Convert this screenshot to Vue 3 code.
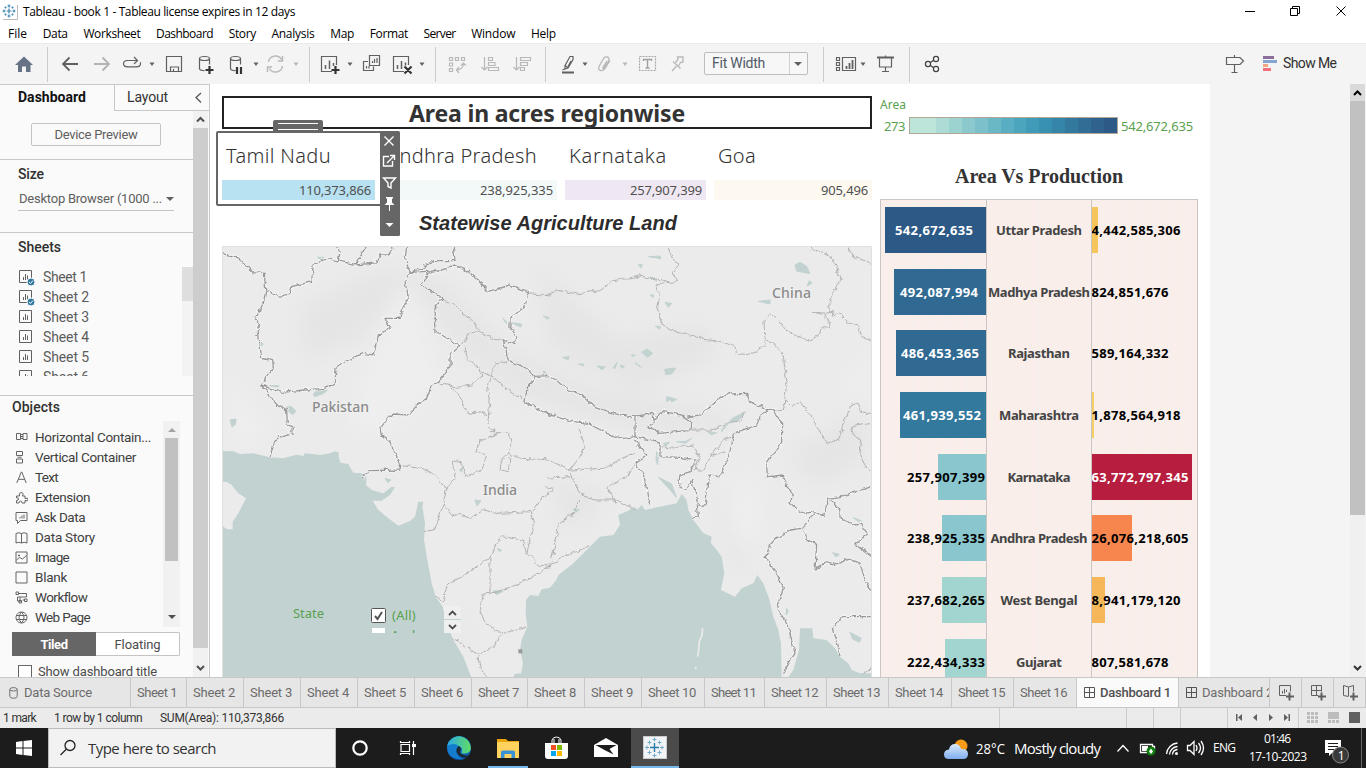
<script setup>
// Spreads a label's letters so that it takes the given width in pixels
const vFit = {
  mounted(el, { value }) {
    const w = el.getBoundingClientRect().width
    el.style.letterSpacing = (value - w) / el.textContent.length + 'px'
  },
}

const menu = [['File', 19], ['Data', 25], ['Worksheet', 57], ['Dashboard', 57], ['Story', 27], ['Analysis', 43], ['Map', 24], ['Format', 38], ['Server', 32], ['Window', 44], ['Help', 25]]
const sheets = [1, 2, 3, 4, 5, 6]
const objects = [
  ['Horizontal Contain...', 116, 'M1.5 2.500h4v6h-4zM8 2.500h4v6h-4zM5.500 3.500h2.500M5.500 5.500h2.500M5.500 7.500h2.500'],
  ['Vertical Container', 101, 'M1.500.5h6v4h-6zM1.5 8h6v4h-6zM2.500 6.200h4'],
  ['Text', 23, 'M1.8 12L6.3 1h.5L11.2 12M3.4 8.3h6.3'],
  ['Extension', 55, 'M1.500 5h3q-1-3 1.500-3.500q3 0 1.500 3.500h2.500v2.500q3-1 3 .8q0 2.500-3 1.200v2.500h-3q0-2-1.500-2t-1.500 2h-2.500v-2.500q2 0 2-1.500t-2-1.200z'],
  ['Ask Data', 50, 'M1 1.500h11v8h-6.500l-3 3v-3h-1.500zM5 7.500v-1.500M7 7.500v-3M9 7.500v-4'],
  ['Data Story', 60, 'M1 2.500q3-1.500 5.500 0v9.500q-2.500-1.500-5.500 0zM6.500 2.500q2.500-1.500 5.500 0v9.500q-3-1.500-5.500 0'],
  ['Image', 34, 'M1 1h11v11h-11zM1.500 9l3-2.500 3 1.500 4-3.500M4 3.500v2M3 4.500h2'],
  ['Blank', 32, 'M1 1h11v11h-11z'],
  ['Workflow', 52, 'M4 2.500h7.500v3.500h-9v4h3M5 6v5M1 1h2.500v2.500h-2.500zM4 9.500h2.500v2.500h-2.500zM9.500 8h2.500v2.500h-2.500zM7.500 9h2'],
  ['Web Page', 55, 'M6.500 1a5.500 5.500 0 1 0 .01 0zM6.500 1q-5 5.500 0 11q5-5.500 0-11M1.500 4.500h10M1.500 8.500h10'],
]
const kpis = [
  { name: 'Tamil Nadu', nw: 105, value: '110,373,866', vw: 72, cls: 'k1' },
  { name: 'Andhra Pradesh', nw: 150, value: '238,925,335', vw: 73, cls: 'k2' },
  { name: 'Karnataka', nw: 98, value: '257,907,399', vw: 72, cls: 'k3' },
  { name: 'Goa', nw: 38, value: '905,496', vw: 47, cls: 'k4' },
]
const ramp = ['#bde5da', '#bde5da', '#addcd6', '#9cd3d1', '#8bc9cf', '#7bc0cb', '#6ab7c6', '#5aaec3', '#4aa5bd', '#409bb8', '#3991b2', '#3485a8', '#33799e', '#316d95', '#2f628c', '#2c5985']
const bars = [
  { n: 'Uttar Pradesh', nw: 86, a: '542,672,635', y: 207, x: 885, tx: 895, c: '#2c5985', p: '4,442,585,306', pl: 89, pw: 6, pc: '#f6c55c' },
  { n: 'Madhya Pradesh', nw: 102, a: '492,087,994', y: 269, x: 894, tx: 900, c: '#306a92', p: '824,851,676', pl: 77, pw: 0, pc: '' },
  { n: 'Rajasthan', nw: 62, a: '486,453,365', y: 330, x: 896, tx: 901, c: '#306a92', p: '589,164,332', pl: 77, pw: 0, pc: '' },
  { n: 'Maharashtra', nw: 80, a: '461,939,552', y: 392, x: 900, tx: 903, c: '#33799e', p: '1,878,564,918', pl: 89, pw: 2, pc: '#f4cf65' },
  { n: 'Karnataka', nw: 63, a: '257,907,399', y: 454, x: 938, tx: 907, c: '#8ac6ce', dark: true, p: '63,772,797,345', pl: 97, pw: 100, pc: '#b71d3e' },
  { n: 'Andhra Pradesh', nw: 97, a: '238,925,335', y: 515, x: 942, tx: 907, c: '#8ac6ce', dark: true, p: '26,076,218,605', pl: 97, pw: 40, pc: '#f6864d' },
  { n: 'West Bengal', nw: 77, a: '237,682,265', y: 577, x: 942, tx: 907, c: '#a2d5d0', dark: true, p: '8,941,179,120', pl: 89, pw: 13, pc: '#f5b75a' },
  { n: 'Gujarat', nw: 46, a: '222,434,333', y: 639, x: 945, tx: 907, c: '#a2d5d0', dark: true, p: '807,581,678', pl: 77, pw: 0, pc: '' },
]
const gridX = [893, 912, 930, 949, 967, 1039, 1107, 1123, 1138, 1155, 1171, 1187]
const tabs = [[1, 56, 40], [2, 57, 42], [3, 57, 42], [4, 57, 42], [5, 57, 42], [6, 57, 42], [7, 56, 41], [8, 57, 42], [9, 57, 42], [10, 63, 48], [11, 60, 45], [12, 62, 47], [13, 62, 47], [14, 63, 48], [15, 62, 47], [16, 63, 47]]
const carets = [[152, 0], [256, 0], [296, 1], [350, 0], [422, 0], [585, 0], [625, 1]]
</script>

<template>
  <div class="window">
    <header class="titlebar">
      <svg class="applogo" viewBox="0 0 16 16"><path d="M15.500 1V15.500H1" fill="none" stroke="#bbb" /><path d="M7 4.500v5M4.500 7h5M7 .5v3M5.500 2h3M7 10.500v3M5.500 12h3M.5 7h3M2 5.500v3M10.500 7h3M12 5.500v3M3.500 2.500v2M2.500 3.500h2M10.500 2.500v2M9.500 3.500h2M3.500 9.500v2M2.500 10.500h2M10.500 9.500v2M9.500 10.500h2" stroke="#3c88b5" stroke-width="1.200" /></svg>
      <span v-fit="272" class="t">Tableau - book 1 - Tableau license expires in 12 days</span>
      <svg class="winbtns" width="120" height="22" viewBox="1240 0 120 22" fill="none" stroke="#000"><path d="M1245 10.500h10M1290.500 7.500h7v7h-7zM1292.500 7v-1.500h7v7h-2M1336.500 5.500l9 9M1345.500 5.500l-9 9" /></svg>
    </header>
    <nav class="menubar"><span v-for="m in menu" :key="m[0]" v-fit="m[1]" class="t">{{ m[0] }}</span></nav>

    <div class="toolbar">
      <svg width="704" height="41" viewBox="0 43 704 41" fill="none" stroke="#606060" stroke-width="1.200">
        <path d="M24 56.500l-9 8.500h3v7h4v-5.500h4v5.500h4.500v-7h2.500z" fill="#667384" stroke="none" />
        <path d="M47.500 47v35M309.500 47v35M435.500 47v35M545.500 47v35" stroke="#cbcbcb" stroke-width="1" />
        <path d="M63 64h15M69.500 57.500L63 64l6.500 6.500" stroke-width="1.800" />
        <path d="M94 64h15M102.500 57.500l6.500 6.500-6.500 6.500" stroke="#b3b3b3" stroke-width="1.800" />
        <path d="M137 60.500h-9.500q-4 .3-4 3.200t4 3.200h9q4-.3 4-3.200v-1.500M134 57l3.500 3.500-3.500 3.500" />
        <path d="M166.500 56.500h15v15h-15zM170.500 71v-4h8v4M173.500 69v2" />
        <g v-for="dx in [0, 31]" :key="dx" :transform="`translate(${dx} 0)`"><ellipse cx="204.500" cy="58.500" rx="5" ry="2" /><path d="M199.500 58.500v10q0 2 5 2.200M209.500 58.500v6" /></g>
        <path d="M209.500 66v8M205.500 70h8M237 67v7M241 67v7M335.500 66v8M331.500 70h8M404.500 66.500l7 7M411.500 66.500l-7 7" stroke="#333" stroke-width="2.200" />
        <g stroke="#b8b8b8"><path d="M268.500 62a7 7 0 0 1 13-2.500M282.500 66a7 7 0 0 1-13 2.500M282.500 56v5h-4.500M267.500 72v-5h4.500" stroke-width="1.500" /></g>
        <path d="M332 71.500h-10.500v-15h15v8.500M404 71.500h-10.500v-15h15v8.500" />
        <path d="M325.500 65v4M329.500 60.500v8.500M333.500 63v3M397.500 65v4M401.500 61v8M405.500 62.500v3" stroke-width="1.500" />
        <path d="M369.500 55.500h10v10h-10zM368 61.500h-4.500v9h10v-4M372.500 61v2M374.500 59v4M377 58v5M366.500 66v2.500M369 66v2.500" />
        <g stroke="#b8b8b8"><path d="M449.500 57.500h3v3h-3zM455.500 57.500h3v3h-3zM461.500 57.500h3v3h-3zM449.500 63h3v3h-3zM449.500 68.500h3v3h-3zM463.500 63q0 6.500-7 7M461 65.500l2.500-2.500 2.500 2.500M459 67l-2.500 3 2.500 3" /><path d="M484.500 57v13M481.500 67l3 3 3-3M488.500 57.500h4v3h-4zM488.500 62.500h6.500v3h-6.500zM488.500 67.500h10v3h-10zM516.500 57v13M513.500 67l3 3 3-3M520.500 57.500h10v3h-10zM520.500 62.500h7v3h-7zM520.500 67.500h4v3h-4z" /></g>
        <path d="M565 65.500l5-9h3v3l-5 8.500-3 1zM565 65.500l3.500 2.500M571 61l-3 5.500M565 69l-2.500 1" /><path d="M562 72.500h12" stroke-width="2" />
        <g stroke="#b8b8b8" stroke-width="1.300"><path d="M607 61l-4 6q-.500 1.500.5 1.500l5-7q1.500-4-1.500-4.500t-4 2.500l-4 7q-1 3.500 1.500 4t4.500-2l5-8" /><path d="M672 71l4.500-5M673 61.500l7.500 7M675.500 62.500l2.500-3-.5-2.500h5.500v5l-2.500.5-2 3.500" /></g>
        <rect x="639.500" y="56.500" width="16" height="14" stroke="#a8a8a8" stroke-dasharray="2 1" /><path d="M643.500 61v-1.500h8v1.500M647.500 59.500v8.500M645.500 68h4" stroke="#a0a0a0" stroke-width="1.400" />
        <path v-for="c in carets" :key="c[0]" :d="`M${c[0] - 2.500} 62.500h5l-2.500 3.500z`" :fill="c[1] ? '#b5b5b5' : '#606060'" stroke="none" />
      </svg>
      <div class="select"><span v-fit="53" class="t">Fit Width</span><i></i></div>
      <svg width="558" height="41" viewBox="808 43 558 41" fill="none" stroke="#606060" stroke-width="1.200">
        <path d="M823.500 47v35M909.500 47v35" stroke="#cbcbcb" stroke-width="1" />
        <path d="M836.500 57.500h3v3h-3zM836.500 62.500h3v3h-3zM836.500 67.500h3v3h-3zM842.500 57.500h13v13h-13z" /><path d="M846.500 66v3M849.500 63v6M852.500 60v9" stroke-width="1.800" /><path d="M860.500 62.500h5l-2.500 3.500z" fill="#606060" stroke="none" />
        <path d="M877 57.500h17" stroke-width="2" /><path d="M879.500 58v9h12v-9M885.500 67v4.500M882 71.500h7M885.500 55.500v2" />
        <g stroke="#404040"><circle cx="928" cy="64" r="2.600" /><circle cx="936" cy="59" r="2.600" /><circle cx="936" cy="69" r="2.600" /><path d="M930.300 62.500l3.500-2.200M930.300 65.500l3.500 2.200" /></g>
        <path d="M1226.500 57.500h13.500l3.500 3.500-3.500 3.500h-13.500zM1234.500 55v2.500M1234.500 64.500v8M1231.500 72.500h6" />
        <g stroke="none"><path d="M1263 56h11v3h-11z" fill="#8a6f9c" /><path d="M1263 60h14v3h-14z" fill="#84a5cf" /><path d="M1263 64h5v3h-5z" fill="#f2a681" /><path d="M1263 68h8v3h-8z" fill="#f5707d" /></g>
        <text x="1283" y="68" class="showme" textLength="54">Show Me</text>
      </svg>
    </div>

    <main class="body">
      <aside class="side">
        <div class="sidetabs"><b v-fit="68" class="t">Dashboard</b><div><span v-fit="41" class="t">Layout</span><svg width="7" height="12" viewBox="0 0 7 12" fill="none" stroke="#555" stroke-width="1.300"><path d="M6 1L1 5.500l5 5" /></svg></div></div>
        <div class="sidebody">
          <div class="panels">
            <section class="preview"><button><span v-fit="83" class="t">Device Preview</span></button></section>
            <section class="size"><h4><span v-fit="26" class="t">Size</span></h4><div class="combo"><span v-fit="143" class="t">Desktop Browser (1000 ...</span><i></i></div></section>
            <section class="sheets"><h4><span v-fit="43" class="t">Sheets</span></h4>
              <div class="sheetbox"><ul>
                <li v-for="s in sheets" :key="s"><svg width="18" height="18" viewBox="0 0 18 18" fill="none" stroke="#606060"><path d="M1.500 2.500h12v12h-12zM5.500 9v3M7.500 6v6M9.500 7.500v4.500" /><g v-if="s < 3"><circle cx="13" cy="14" r="4" fill="#31799f" stroke="#fafafa" /><path d="M11 14l1.500 1.500 2.500-3" stroke="#fff" /></g></svg><span v-fit="s === 1 ? 44 : 46" class="t">Sheet {{ s }}</span></li>
              </ul><div class="mini"><i></i></div></div>
            </section>
            <section class="objects"><h4><span v-fit="48" class="t">Objects</span></h4>
              <div class="objbox"><ul><li v-for="o in objects" :key="o[0]"><svg width="13" height="13" viewBox="0 0 13 13" fill="none" stroke="#646464"><path :d="o[2]" /></svg><span v-fit="o[1]" class="t">{{ o[0] }}</span></li></ul>
                <div class="objscroll"><i class="up"></i><b></b><i class="dn"></i></div></div>
              <div class="seg"><b><span v-fit="27" class="t">Tiled</span></b><span><span v-fit="46" class="t">Floating</span></span></div>
              <label><i></i><span v-fit="119" class="t">Show dashboard title</span></label>
            </section>
          </div>
          <div class="vscroll"><svg width="15" height="17" viewBox="0 0 15 17"><path d="M4 10.500L7.500 7l3.500 3.500" fill="none" stroke="#505050" stroke-width="2" /></svg><b></b><svg width="15" height="29" viewBox="0 0 15 29"><path d="M4 18l3.500 3.500L11 18" fill="none" stroke="#505050" stroke-width="2" /></svg></div>
        </div>
      </aside>

      <div class="canvas">
        <div class="left">
          <h1><span v-fit="276" class="t">Area in acres regionwise</span></h1>
          <div class="kpis">
            <div v-for="k in kpis" :key="k.name" :class="['kpi', k.cls]"><div class="kn"><span v-fit="k.nw" class="t">{{ k.name }}</span></div><div class="kv"><span v-fit="k.vw" class="t">{{ k.value }}</span></div></div>
            <div class="selbox"></div><div class="grip"></div>
            <svg class="seltools" width="20" height="105" viewBox="380 131 20 105" fill="none" stroke="#fff" stroke-width="1.400"><rect x="380" y="131" width="20" height="105" rx="1.500" fill="#666" stroke="none" /><path d="M384.500 136.500l9 9M393.500 136.500l-9 9M389 156.500h-5.500v9.500h9v-5M387 163l7-7M390 155.500h4.500v4.500M383.500 178h12l-4.500 5v5l-3-1.500v-3.500z" /><path d="M386 197h7v1.500h-1v4l2.500 2.500h-10l2.500-2.500v-4h-1zM389 205h1v6h-1zM385.500 223h8l-4 4z" fill="#fff" stroke="none" /></svg>
          </div>
          <h2><span v-fit="258" class="t">Statewise Agriculture Land</span></h2>
          <div class="map">
            <svg width="650" height="431" viewBox="0 0 650 431">
              <defs>
                <filter id="rough" x="-5%" y="-5%" width="110%" height="110%" color-interpolation-filters="sRGB"><feTurbulence type="fractalNoise" baseFrequency=".055" numOctaves="3" seed="4" /><feDisplacementMap in="SourceGraphic" scale="16" xChannelSelector="R" yChannelSelector="G" /></filter>
                <filter id="soft" x="-20%" y="-20%" width="140%" height="140%"><feGaussianBlur stdDeviation="30" /></filter>
              </defs>
              <rect width="650" height="431" fill="#ebebeb" />
              <g transform="translate(-2 -6) scale(.33333)">
                <g fill="#e5e5e5" filter="url(#soft)"><path d="M240 200L480 90 650 110 880 330 1100 440 1500 520 1560 580 1250 570 880 470 700 300 560 120 420 300 250 350zM1700 650L1940 500 1940 650 1800 740zM1490 730L1600 1000 1530 960zM980 720L1170 760 1050 880zM950 80L1200 300 1450 250 1500 350 1250 450 990 330zM700 1060L770 1250 730 1210z" /></g>
                <g fill="#f1f1f1" filter="url(#soft)" opacity=".6"><path d="M1940 320l-70 120 70 60zM10 380l130 200-90 60zM1550 680l-20 180 60 110 40-200zM560 140L380 550 480 590 660 420z" /></g>
                <g class="sea">
                  <path d="M0 633L40 634 60 642 100 640 150 652 190 655 230 644 250 648 255 640 300 645 330 640 345 634 356 637 357 655 362 668 385 672 400 698 425 700 440 712 438 735 455 750 490 760 515 740 525 742 510 765 485 782 458 782 475 810 505 835 535 857 570 843 585 830 595 785 610 785 607 800 615 850 612 900 622 960 635 1030 648 1072 668 1100 680 1150 700 1200 730 1250 755 1315H0zM0 725L20 726 35 735 55 760 78 775 55 820 38 845 38 868 20 868 8 858 0 855z" fill-rule="evenodd" />
                  <path d="M880 1315L884 1302 904 1300 909 1270 900 1230 905 1200 922 1160 917 1120 918 1080 930 1065 955 1068 965 1048 990 1043 1009 1020 1015 1005 1060 970 1105 925 1140 890 1180 885 1200 855 1195 825 1225 812 1240 800 1253 808 1265 795 1275 810 1305 803 1335 797 1370 790 1385 762 1400 780 1405 810 1420 840 1450 880 1475 890 1473 910 1490 930 1505 950 1513 1000 1503 1050 1545 1070 1565 1045 1600 1030 1612 1005 1630 1030 1647 1075 1660 1130 1675 1170 1683 1210 1685 1315z" />
                  <path d="M1703 1315L1720 1290 1737 1230 1740 1165 1777 1165 1780 1195 1820 1200 1845 1225 1860 1250 1885 1270 1895 1290 1920 1300 1960 1300V1315z" />
                </g>
                <g class="lakes">
                  <path d="M280 462l10-10 32-2-10 10-28 10zM202 500h12l14 14-10 10-12-10zM30 540l18-3-2 16-10 8zM292 52h18l-3 10zM148 437h28v4zM848 235l15 13-4 3zM865 245l40 8-2 8zM970 228l18 5-4 5zM970 393l8 4-6 4zM718 690l14-12-7 18zM765 780l18 2-12 16zM832 925l13 6-7 4zM820 1052l30 2-20 10zM495 715l18 5-10 8zM122 305l8 8-8 6z" />
                  <path d="M1286 50l34-2 3 8zM1255 74h12l-4 10zM1292 110l18 8v6zM1290 165h10v8zM1335 187l20 3-10 12zM1725 75l15-8 20 12 10 22-40-8zM1768 122l8 8-15 8zM1615 184l35-4v12zM1265 337l15-10 18 13-16 12zM1234 345h12l-8 5zM1306 258l16 2-4 8zM1334 388l33-4-12 18-18 2zM1245 368l20 14-8-4zM1028 352l20-2-4 10zM1075 372h16v6zM1132 378l24 3-10 8zM1180 382l12-15-8 20zM1200 375l14 4-8 6zM1340 470l30 8-15 8-5-8-10 8zM1505 570l32-35 40-20-20 25-32 10-20 25zM1465 578h25l-15 6zM1370 605h25l20-10-18 15zM1330 610l20-3-12 10zM1310 635l5 10-2 30-5-15zM1315 712l40 20 14 40-18-22zM1060 807l18 2-10 8zM1838 938l20 5-10 8zM1890 1177l34 18-6 12-20-10zM1700 1105l5 10-7 10zM1900 833l25 10-5 5z" />
                </g>
                <path d="M1448 1165l-2 20-8 20-2 25-3 20M1427 1280v8" stroke="#ebebeb" stroke-width="5" fill="none" />
                <g class="borders" filter="url(#rough)">
                  <g class="light">
                    <path d="M667 178L700 190 725 215 755 240 780 275 820 295 850 298M720 318L745 285 780 275M732 325L745 360 780 385 785 410 755 435 710 442 685 432 655 430M685 432L715 465 745 520 780 515 805 530 810 480 800 450 815 410 785 395M810 410L825 372 865 365M815 410L850 440 885 462 915 482M805 530L810 565 835 580 780 600 768 635 800 645 785 690 740 710 720 665 700 660 705 715 680 745M810 575L865 575 875 600 865 640 845 660 840 690 865 695 870 650M865 640L900 655 990 660M545 678L590 680 640 700 680 745 670 790 690 820 755 835 790 810 840 820 930 815 940 850 930 900 920 940 960 980 990 975M990 760L960 780 935 815M670 790L655 840 640 870 612 875M920 940L910 900 845 890 825 920 810 950 770 980 740 1000 680 1035 670 1085 650 1070M810 950L810 1060 790 1062 780 1100 795 1150 850 1180 920 1162M990 980L940 1010 870 1045 810 1060M850 1180L820 1220 775 1245 700 1195M775 1245L785 1290 800 1310M920 160L990 168" />
                    <path d="M975 168L1010 150 1070 162 1140 152 1180 122 1260 108 1350 125M1345 20L1352 50 1378 75 1360 98 1370 125 1305 132 1318 170 1310 200 1325 250 1350 270 1400 280 1450 298 1505 305 1545 320 1550 340 1590 345 1635 315 1635 300M1635 300L1632 245 1655 225 1675 240 1710 280 1765 300 1790 290 1810 260 1830 262 1815 225 1775 215 1820 220 1840 215M1770 25L1830 45 1850 80 1860 120 1835 170 1825 200 1840 225 1860 220 1880 245 1915 255 1925 290 1955 300M1635 300L1670 315 1690 350 1700 420 1695 480 1715 500 1740 485 1780 540 1820 610 1855 600 1870 550 1895 495 1915 490 1925 520 1955 520M1880 20L1900 50 1955 70M1695 480L1690 510 1660 515M1955 550L1895 560 1900 590 1925 600 1920 640 1935 680 1955 690M975 655L1050 690 1080 650 1095 620 1075 560M1050 700L1080 760 1125 780 1190 780 1245 810M975 715L1050 710M1050 690L1150 685 1220 650 1245 640M1245 670L1220 710 1160 740 1190 790M1080 780L1055 825 1015 850 1010 890 995 960M975 985L1030 950 1080 930 1105 920M1320 620L1360 625 1415 615 1440 650 1425 690M1410 570L1480 570 1520 550 1565 540 1570 520M1540 590L1510 600 1470 650 1450 690 1420 690M1470 650L1515 635M1950 1290L1930 1298M975 740L1000 745 975 770" />
                  </g>
                  <g class="halo">
                    <path id="b1" d="M8 42L50 50 75 75 100 98 133 100 137 150 130 190 105 235 122 255 112 275 122 355 158 362 160 385 122 435 145 460 160 485 200 510 202 555 220 560 218 582 185 590 163 605 150 655M137 152L180 172 210 160 215 140 275 125 280 75 320 55 350 62 410 75 435 20M350 20L360 35 355 62M410 75L470 68 480 45 505 45 520 22M122 435L185 457 255 450 310 445 345 432 348 385 375 365 430 340 460 345 475 285 510 265 495 235 540 235 548 205 565 175 555 120 570 97 660 92 705 78 740 90 775 120 805 155 870 135 925 155 915 200 870 235 870 260 890 290 880 310 850 300 865 360 920 385 945 412 990 410M570 97L555 60 560 20M570 97L610 80 645 62 705 62 700 20M660 92L625 100 605 135 645 160 667 178 645 205 648 275 720 318 690 345 690 380 660 425 635 435 620 475 590 495 570 525 515 522 480 565 485 585 510 605 525 640 542 680 540 690 450 692 425 712M945 412L920 445 915 485 950 505 990 527" />
                    <path id="b2" d="M975 405L1010 420 1055 455 1085 465 1120 500 1180 520 1230 530 1270 525 1300 520 1303 550 1280 560M1245 530L1245 590 1210 595 1160 580 1105 550 1060 545 975 520M1280 560L1320 580 1370 575 1410 572 1412 545 1385 525 1330 515 1300 540M1400 532L1440 525 1480 490 1520 462 1580 460 1590 485 1640 508 1660 510 1675 540 1685 550 1685 610 1660 640 1640 670 1642 710 1690 705 1700 740 1720 760 1710 790 1750 820 1785 815 1810 830 1825 775 1860 770 1955 740M1245 590L1290 600 1320 610 1320 650 1380 652 1430 660 1410 695 1380 705 1375 740 1400 750 1415 720 1430 770 1435 830 1415 835M1245 600L1260 625 1280 645 1245 670 1270 700 1280 750 1287 795M1650 510L1620 530 1610 555 1540 580 1535 620 1520 660 1500 710 1470 705 1455 795 1435 795M1785 820L1745 865 1710 870 1660 900 1650 920 1645 940 1635 950 1675 1010 1690 1045 1670 1100 1705 1160 1725 1240 1688 1300M1755 870L1760 900 1790 910 1785 990 1820 965 1850 975 1885 955 1920 970 1935 1020 1955 1055M1830 780L1860 810 1860 835 1910 855 1925 850 1940 885 1905 910 1955 950M1955 1130L1865 1130 1840 1165 1855 1220 1860 1245M1955 1275L1945 1295" />
                  </g>
                  <use href="#b1" class="heavy" /><use href="#b2" class="heavy" />
                </g>
                <path d="M895 1228h12v12h-12z" fill="#999" />
              </g>
              <rect x=".5" y=".5" width="649" height="440" fill="none" stroke="#e0e0e0" />
              <g class="ml"><text x="550" y="52" textLength="39">China</text><text x="90" y="166" textLength="57">Pakistan</text><text x="261" y="249" textLength="34">India</text></g>
            </svg>
            <div class="filter"><span v-fit="31" class="t">State</span><div class="opts"><p><svg width="15" height="15" viewBox="0 0 15 15" fill="#fff"><rect x=".5" y=".5" width="14" height="14" rx="1" stroke="#555" /><path d="M4 8l2.500 3L11 4" fill="none" stroke="#555" stroke-width="2" /></svg><span v-fit="24" class="t">(All)</span></p><p><i></i><span class="t">And</span></p></div>
              <div class="spin"><svg width="17" height="27" viewBox="0 0 17 27" fill="none"><path d="M0 13.500h17" stroke="#c2d1d1" /><path d="M5 9l3.500-3.500L12 9M5 19l3.500 3.500L12 19" stroke="#505050" stroke-width="1.800" /></svg></div></div>
          </div>
        </div>

        <div class="right">
          <div class="legend"><span v-fit="26" class="t">Area</span><div><span v-fit="21" class="t">273</span><div class="ramp"><i v-for="(c, i) in ramp" :key="i" :style="{ background: c }"></i></div><span v-fit="72" class="t">542,672,635</span></div></div>
          <h3><span v-fit="168" class="t">Area Vs Production</span></h3>
          <svg class="chart" width="318" height="478" viewBox="880 199 318 478">
            <rect x="880.500" y="199.500" width="317" height="490" fill="#f9eee9" stroke="#cac6c4" />
            <path v-for="g in gridX" :key="g" :d="`M${g}.5 200V677`" stroke="#f3efed" />
            <g v-for="b in bars" :key="b.n">
              <rect :x="b.x" :y="b.y" :width="986 - b.x" height="46" :fill="b.c" /><rect x="1092" :y="b.y" :width="b.pw" height="46" :fill="b.pc" />
              <text :x="b.tx" :y="b.y + 28" textLength="78" :class="b.dark ? 'k' : 'w'">{{ b.a }}</text>
              <text :x="1039 - b.nw / 2" :y="b.y + 28" :textLength="b.nw" class="n">{{ b.n }}</text>
              <text x="1091.500" :y="b.y + 28" :textLength="b.pl" :class="b.pw === 100 ? 'w' : 'k'">{{ b.p }}</text>
            </g>
            <path d="M986.500 199v478M1091.500 199v478" stroke="#cac6c4" />
          </svg>
        </div>
      </div>
      <div class="vscroll big"><svg width="15" height="17" viewBox="0 0 15 17"><path d="M4 11l3.500-3.500L11 11" fill="none" stroke="#000" stroke-width="2" /></svg><b></b><svg width="15" height="17" viewBox="0 0 15 17"><path d="M4 6l3.500 3.500L11 6" fill="none" stroke="#333" stroke-width="2" /></svg></div>
    </main>

    <div class="tabs">
      <div class="ds"><svg width="9" height="12" viewBox="0 0 9 12" fill="none" stroke="#707070"><ellipse cx="4.500" cy="2.300" rx="3.700" ry="1.700" /><path d="M.8 2.300v7q0 2 3.700 2t3.700-2v-7" /></svg><span v-fit="68" class="t">Data Source</span></div>
      <div v-for="t in tabs" :key="t[0]" :style="{ width: t[1] + 'px' }"><span v-fit="t[2]" class="t">Sheet {{ t[0] }}</span></div>
      <div class="on"><svg width="12" height="12" viewBox="0 0 12 12" fill="none" stroke="#555"><path d="M.5.5h10v10h-10zM5.500.5v10M.5 5.500h10" /></svg><b v-fit="71" class="t">Dashboard 1</b></div>
      <div class="d2"><svg width="12" height="12" viewBox="0 0 12 12" fill="none" stroke="#555"><path d="M.5.5h10v10h-10zM5.500.5v10M.5 5.500h10" /></svg><span v-fit="71" class="t">Dashboard 2</span></div>
      <div v-for="i in 3" :key="i" class="add"><svg width="17" height="17" viewBox="0 0 17 17" fill="none" stroke="#606060"><path v-if="i === 1" d="M8 11.500H1.500v-10h11v6M4.500 7v2.500M6.500 5v4.500M8.500 6v2" /><path v-if="i === 2" d="M8 11.500H1.500v-10h10v6M6.500 1.500v10M1.500 6.500h10" /><path v-if="i === 3" d="M6.500 12.500l-5-1v-10l5 1.500 5-1.500v6M6.500 3v9" /><path d="M11.500 8.500v8M8 12.500h8" stroke-width="2" /></svg></div>
    </div>
    <div class="status"><span v-fit="33" class="t">1 mark</span><span v-fit="88" class="t">1 row by 1 column</span><span v-fit="124" class="t">SUM(Area): 110,373,866</span>
      <svg width="370" height="20" viewBox="996 708 370 20"><path d="M999.500 708v20M1126.500 708v20M1153.500 708v20M1180.500 708v20M1227.500 708v20M1298.500 708v20" stroke="#ccc" /><path d="M1236 714h1.500v7H1236zM1242 714v7l-4-3.500zM1257 714v7l-4-3.500zM1269 714v7l4-3.500zM1284 714v7l4-3.500zM1288.500 714h1.500v7h-1.500zM1349 712h11v11h-11z" fill="#606060" /><path d="M1307 712h3v3h-3zM1311 712h3v3h-3zM1315 712h3v3h-3zM1307 716h3v3h-3zM1311 716h3v3h-3zM1315 716h3v3h-3zM1307 720h3v3h-3zM1311 720h3v3h-3zM1315 720h3v3h-3zM1328 712h11v7h-11zM1328 720h3v3h-3zM1332 720h3v3h-3zM1336 720h3v3h-3z" fill="#bcbcbc" /></svg>
    </div>

    <footer class="taskbar">
      <svg width="48" height="40" viewBox="0 728 48 40" fill="#fff"><path d="M16 742l6.500-1v6.500H16zM23.500 741l8.500-1v7.500h-8.500zM16 748.500h6.500v6.500l-6.500-1zM23.500 748.500h8.500v7.500l-8.500-1z" /></svg>
      <div class="search"><svg width="18" height="18" viewBox="0 0 18 18" fill="none" stroke="#222" stroke-width="1.300"><circle cx="11" cy="6.500" r="5" /><path d="M7.500 10L1.500 16" /></svg><span v-fit="128" class="t">Type here to search</span></div>
      <svg width="344" height="40" viewBox="336 728 344 40">
        <defs><linearGradient id="eg"><stop stop-color="#2aa9e6" /><stop offset="1" stop-color="#62dc63" /></linearGradient><linearGradient id="eb" x2="0" y2="1"><stop stop-color="#1b9bde" /><stop offset="1" stop-color="#0b50a5" /></linearGradient></defs>
        <rect x="631" y="728" width="48" height="40" fill="#4b4b4b" /><path d="M488 766h40v2h-40zM631 766h48v2h-48z" fill="#76b9ed" />
        <circle cx="360" cy="748" r="6.700" fill="none" stroke="#fff" stroke-width="2.200" />
        <path d="M400.500 741v1.500h9V741M401 744.500h8.500v7h-8.500zM400.500 755v-1.500h9v1.500M413.500 741v14" fill="none" stroke="#fff" stroke-width="1.200" /><path d="M412 744h4v3h-4z" fill="#fff" />
        <circle cx="459" cy="748" r="12" fill="url(#eb)" /><path d="M447.200 745.500a12 12 0 0 1 23.600 2.500c0 5-6 6.500-9.500 5q2.500-5-2.300-7-6-2-11.800-.5z" fill="url(#eg)" /><path d="M458 746q-4 5 1 9.500t11-.5q-4 1.500-8.500-1-2.500-2-.5-4.500 0-3-3-3.500z" fill="#1c2933" /><path d="M447.500 746q7-4 11 0-4 3.500-1.500 8t7 5q-12 1.500-16-7z" fill="#147dce" />
        <path d="M497 739h9l2 2h11v17h-22z" fill="#e8a60c" /><path d="M497 742h22v16h-22z" fill="#ffd35e" /><path d="M501 758v-6q0-1.500 2-1.500h10q2 0 2 1.500v6h-3.500v-4h-7v4z" fill="#3a91d5" />
        <path d="M545 743h23v13q0 3-3 3h-17q-3 0-3-3z" fill="#fff" /><path d="M552 743v-3q1-3 4.500-3t4.500 3v3M554 743v-4M559 743v-4" fill="none" stroke="#fff" /><path d="M551 745h5v5h-5z" fill="#f25022" /><path d="M557 745h5v5h-5z" fill="#7fba00" /><path d="M551 751h5v5h-5z" fill="#00a4ef" /><path d="M557 751h5v5h-5z" fill="#ffb900" />
        <path d="M594 745l12-7 12 7v12h-24z" fill="#fff" /><path d="M595.500 745h21l-7 4 4 5.500-9-4.500z" fill="#1c1c1c" />
        <rect x="643.500" y="736.500" width="23" height="22" fill="#f2f5f7" stroke="#ccc" /><path d="M654.500 743v9M650 747.500h9" stroke="#2d79a8" stroke-width="1.400" /><path d="M654.500 737.500v4M652.500 739.500h4M654.500 753.500v4M652.500 755.500h4M645 747.500h4M647 745.500v4M660 747.500h4M662 745.500v4M649.500 740.500v4M647.500 742.500h4M659.500 740.500v4M657.500 742.500h4M649.500 750.500v4M647.500 752.500h4M659.500 750.500v4M657.500 752.500h4" stroke="#78aacb" />
      </svg>
      <svg class="tray" width="430" height="40" viewBox="936 728 430 40">
        <defs><linearGradient id="cl" x2="0" y2="1"><stop stop-color="#dceafb" /><stop offset="1" stop-color="#7faef0" /></linearGradient></defs>
        <circle cx="961" cy="746" r="6.500" fill="#f49b18" /><path d="M949 759q-5 0-5-4.500t5-5q1-5.500 6-5.500t6 5q7-.5 7 5 0 5-5 5z" fill="url(#cl)" />
        <g><text x="976" y="754" textLength="29" lengthAdjust="spacingAndGlyphs">28°C</text><text x="1014" y="754" textLength="87">Mostly cloudy</text></g>
        <g fill="none" stroke="#fff" stroke-width="1.300"><path d="M1117.500 751.500l5.500-6 5.500 6M1140.500 744.500h12v8h-12zM1153 746.500h1.500v3M1166.500 754a12 12 0 0 1 11-11M1169.500 754.500a8.500 8.500 0 0 1 8-8M1172.500 754.500a5.500 5.500 0 0 1 5-5M1187.500 745.500h2.500l4-4v13l-4-4h-2.500zM1196 745q2 3 0 6M1198.500 743q4 5 0 10M1201 741q5 7 0 14" /></g><path d="M1142 746h6v5h-6z" fill="#fff" /><circle cx="1176.500" cy="753.500" r="1.500" fill="#fff" /><circle cx="1151" cy="751" r="4.500" fill="#107c10" /><path d="M1151 748.500l2 3-2 2.500-2-2.500z" fill="#fff" />
        <g class="small"><text x="1213" y="752" textLength="23">ENG</text><text x="1264" y="743" textLength="27">01:46</text><text x="1249" y="761" textLength="58">17-10-2023</text></g>
        <path d="M1325 740h16v13h-9l-3 3v-3h-4z" fill="#fff" /><path d="M1328 743.500h10M1328 746.500h10M1328 749.500h6" stroke="#1c1c1c" /><circle cx="1340.500" cy="755" r="8" fill="#3a3a3a" stroke="#888" /><text x="1337.500" y="760" class="badge">1</text><path d="M1361.500 728v40" stroke="#666" />
      </svg>
    </footer>
  </div>
</template>

<style>
html, body { margin: 0; overflow: hidden; }
</style>
<style scoped>
* { box-sizing: border-box; }
h1, h2, h3, h4, ul, p { margin: 0; padding: 0; list-style: none; font-weight: inherit; }
svg { display: block; flex: none; }
.t { display: inline-block; white-space: pre; flex: none; width: max-content; }
.window { width: 1366px; height: 768px; overflow: hidden; background: #fff; font: 13px Roboto, "Liberation Sans", sans-serif; color: #4c4c4c; display: flex; flex-direction: column; }
.titlebar { height: 23px; display: flex; align-items: center; font: 12px/22px "Open Sans", "Noto Sans", sans-serif; color: #000; flex: none; }
.applogo { width: 16px; height: 16px; margin: 0 5px 0 2px; }
.winbtns { margin-left: auto; margin-right: 6px; }
.menubar { height: 20px; display: flex; gap: 15.7px; padding-left: 8px; font: 12px/21px "Open Sans", "Noto Sans", sans-serif; color: #000; flex: none; }
.toolbar { height: 41px; display: flex; align-items: center; background: #f4f4f4; box-shadow: inset 0 1px #ececec; flex: none; }
.select { width: 104px; height: 23px; margin-bottom: 1px; border: 1px solid #bdbdbd; border-radius: 2px; background: #f7f7f7; display: flex; align-items: center; justify-content: space-between; padding-left: 7px; font-size: 14px; color: #505a66; }
.select i, .combo i { position: relative; width: 18px; height: 21px; border-left: 1px solid #d0d0d0; }
.select i::after, .combo i::after { content: ""; position: absolute; left: 4px; top: 9px; border: 4px solid transparent; border-top-color: #606060; border-bottom: 0; }
.showme { font: 14px Roboto, sans-serif; fill: #303030; stroke: none; }
.body { height: 593px; flex: none; display: flex; background: #f4f4f4; }
.side { width: 210px; height: 593px; background: #fafafa; border-top: 1px solid #c8c8c8; border-right: 1px solid #c8c8c8; display: flex; flex-direction: column; overflow: hidden; }
.sidetabs { height: 26px; flex: none; display: flex; font-size: 14px; line-height: 25px; color: #333; }
.sidetabs > b { margin-left: 18px; color: #111; }
.sidetabs > div { margin-left: auto; width: 95px; background: #fafafa; border-left: 1px solid #c8c8c8; border-bottom: 1px solid #c8c8c8; display: flex; justify-content: space-between; align-items: center; padding: 0 7px 0 12px; }
.sidebody { display: flex; flex: 1; min-height: 0; }
.panels { width: 193px; }
.preview { height: 48px; padding: 12px 0 0 31px; }
.preview button { display: block; width: 130px; height: 23px; border: 1px solid #c4c4c4; border-radius: 2px; background: #fafafa; padding: 0; font: 13px/19px Roboto, sans-serif; color: #606060; }
h4 { font-weight: 500; font-size: 14px; line-height: 17px; height: 18px; color: #303030; }
.size { border-top: 1px solid #c8c8c8; height: 73px; padding: 6px 0 0 18px; }
.combo { margin-top: 4px; width: 156px; height: 23px; border-bottom: 1px solid #c4c4c4; display: flex; justify-content: space-between; align-items: center; padding: 0 0 2px 1px; color: #606060; }
.combo i { border: 0; width: 9px; } .combo i::after { left: 1px; }
.sheets { border-top: 1px solid #c8c8c8; height: 163px; padding: 6px 0 0 18px; }
.sheetbox { margin-top: 10px; height: 109px; overflow: hidden; display: flex; justify-content: space-between; }
.sheetbox li { height: 20px; display: flex; align-items: center; gap: 7px; font-size: 14px; color: #5c5c5c; }
.mini { width: 11px; background: #f3f3f3; } .mini i { display: block; height: 34px; background: #dedede; }
.objects { border-top: 1px solid #c8c8c8; padding: 3px 0 0 12px; }
.objbox { margin-top: 4px; height: 206px; width: 168px; display: flex; justify-content: space-between; }
.objbox ul { padding: 6px 0 0 3px; }
.objbox li { height: 20px; display: flex; align-items: center; gap: 7px; color: #404040; font-size: 13.5px; }
.objscroll { width: 17px; background: #f1f1f1; display: flex; flex-direction: column; align-items: center; }
.objscroll b { width: 13px; height: 123px; background: #c1c1c1; margin-bottom: 54px; }
.objscroll i { border: 4px solid transparent; }
.objscroll .up { border-bottom-color: #a3a3a3; margin: 3px 0 6px; height: 8px; width: 8px; }
.objscroll .dn { border-top-color: #505050; }
.seg { display: flex; margin-top: 5px; width: 168px; height: 24px; text-align: center; line-height: 23px; border: 1px solid #c4c4c4; border-radius: 1px; }
.seg > b { background: #666; color: #fff; width: 84px; margin: -1px 0 -1px -1px; line-height: 25px; } .seg > span { flex: 1; background: #fff; }
.objects label { display: flex; padding: 7px 0 0 6px; height: 22px; gap: 6px; line-height: 17px; overflow: hidden; }
.objects label i { width: 14px; height: 14px; border: 1px solid #666; background: #fff; margin-top: 2px; }
.vscroll { width: 15px; background: #f1f1f1; display: flex; flex-direction: column; }
.vscroll b { height: 520px; background: #cdcdcd; }
.canvas { width: 1000px; background: #fff; display: flex; gap: 8px; padding: 0 12px; }
.left { width: 650px; padding-top: 12px; }
h1 { height: 33px; border: 2px solid #222; text-align: center; font: bold 23px/30px "Noto Sans", sans-serif; color: #333; }
.kpis { position: relative; height: 77px; display: grid; grid-template-columns: 153px 174px 141px 158px; column-gap: 8px; padding-top: 2px; }
.kn { height: 49px; font: 300 20px/50px "Noto Sans", "Open Sans", sans-serif; color: #333; padding-left: 4px; }
.kv { height: 20px; text-align: right; padding-right: 4px; font: 13px/20px "Noto Sans", sans-serif; color: #505050; }
.k1 .kv { background: #b8e2f1; } .k2 .kv { background: #f3f9f9; } .k3 .kv { background: #efe8f3; } .k4 .kv { background: #fdf8f0; }
.selbox { position: absolute; left: -6px; top: 2px; width: 166px; height: 75px; border: 2px solid #666; border-radius: 2px; }
.grip { position: absolute; left: 51px; top: -9px; width: 50px; height: 12px; background: #666; border-radius: 2px 2px 0 0; }
.grip::after { content: ""; position: absolute; left: 5px; right: 5px; top: 3px; height: 5px; border: solid #fff; border-width: 1px 0; }
.seltools { position: absolute; left: 158px; top: 2px; z-index: 2; }
h2 { height: 40px; text-align: center; padding-left: 2px; font: italic bold 20px/34px "Liberation Sans", sans-serif; color: #2c2c2c; }
.map { height: 431px; position: relative; overflow: hidden; }
.sea { fill: #c2d2d1; }
.lakes { fill: #c2d2d1; stroke: #c2d2d1; stroke-width: 3; }
.borders path { fill: none; }
.light { stroke: #b1b1b1; stroke-width: 3; }
.halo { stroke: #f5f5f5; stroke-width: 9; }
.heavy { stroke: #999; stroke-width: 4; fill: none; }
.ml { font: 500 14px "Noto Sans", sans-serif; fill: #8b8b8b; stroke: #f0f0f0; stroke-width: 2px; paint-order: stroke; }
.filter { position: absolute; left: 71px; top: 360px; display: flex; width: 168px; height: 27px; font: 13px/16px "Noto Sans", sans-serif; color: #59a14f; }
.filter > .t { margin-top: -1px; }
.opts { margin-left: 47px; height: 27px; overflow: hidden; padding-top: 2px; }
.opts p { display: flex; gap: 6px; height: 20px; }
.opts .t { margin-top: -1px; }
.opts i { width: 13px; height: 13px; background: #fff; margin-left: 1px; }
.spin { margin-left: auto; background: #efefef; }
.right { width: 318px; padding-top: 12px; }
.legend { height: 64px; font: 12px/18px "Noto Sans", sans-serif; color: #59a14f; }
.legend > div { display: flex; align-items: center; padding: 3px 0 0 4px; font-size: 13px; height: 20px; }
.ramp { width: 209px; height: 17px; margin: 0 3px 0 4px; border: 1px solid #b3a898; display: flex; flex: none; } .ramp i { flex: 1; }
h3 { height: 39px; text-align: center; font: bold 20px/33px "Liberation Serif", serif; color: #333; }
.chart text { font: bold 13px "Noto Sans", sans-serif; } .w { fill: #fff; } .k { fill: #000; } .n { fill: #444; }
.big { margin-left: 140px; width: 15px; background: #f0f0f0; } .big b { height: 414px; background: #c1c1c1; margin-bottom: 145px; } .big svg:first-child { background: #dadada; }
.tabs { height: 31px; flex: none; background: #e6e6e6; border-top: 1px solid #c8c8c8; border-bottom: 1px solid #c8c8c8; display: flex; color: #6c6c6c; }
.tabs > div { flex: none; border-right: 1px solid #c8c8c8; display: flex; align-items: center; padding-left: 6px; overflow: hidden; }
.tabs .ds { width: 131px; padding-left: 9px; gap: 6px; }
.tabs .on { width: 102px; padding-left: 7px; background: #fafafa; color: #505050; gap: 4px; } .tabs .on b { font-weight: 500; }
.tabs .d2 { width: 91px; padding-left: 7px; gap: 4px; } .tabs .add { width: 32px; padding-left: 8px; }
.status { height: 20px; flex: none; background: #ebebeb; display: flex; align-items: center; padding-left: 3px; gap: 18px; font-size: 12px; color: #333; }
.status svg { margin-left: auto; }
.taskbar { height: 40px; flex: none; background: #1c1c1c; display: flex; }
.search { width: 288px; background: #f2f2f2; border: 1px solid #bbb; display: flex; align-items: center; padding-left: 10px; gap: 11px; font: 15px "Open Sans", sans-serif; color: #333; }
.tray { margin-left: auto; fill: #fff; } .taskbar text { font: 15px "Open Sans", sans-serif; fill: #fff; } .taskbar .small text { font-size: 12px; } .taskbar .badge { font-size: 13px; }
</style>
